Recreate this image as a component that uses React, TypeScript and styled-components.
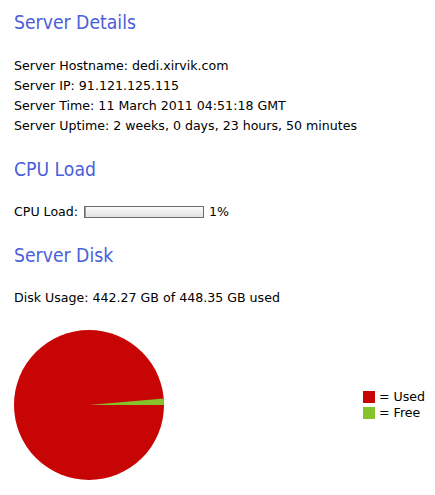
import React from "react";
import styled, { createGlobalStyle } from "styled-components";

const Global = createGlobalStyle`
  html, body { margin: 0; padding: 0; background: #ffffff; }
  body { font-family: "DejaVu Sans", Verdana, sans-serif; color: #000; }
`;

const Page = styled.div`
  padding: 11px 0 0 14px;
  width: 421px;
  box-sizing: border-box;
`;

const Heading = styled.h2<{ $gap: number }>`
  margin: 0 0 ${(p) => p.$gap}px 0;
  font-family: "DejaVu Sans Condensed", "DejaVu Sans", sans-serif;
  font-stretch: condensed;
  font-size: 19.2px;
  line-height: 24px;
  font-weight: normal;
  color: #4a60d8;
`;

const Section = styled.div<{ $gap: number }>`
  margin-bottom: ${(p) => p.$gap}px;
`;

const Line = styled.div`
  font-size: 12.6px;
  line-height: 20px;
  white-space: nowrap;
`;

const CpuRow = styled.div`
  display: flex;
  align-items: center;
  font-size: 12.6px;
  line-height: 20px;
  gap: 5px;
  white-space: nowrap;
`;

const Bar = styled.div`
  width: 120px;
  height: 12px;
  box-sizing: border-box;
  border: 1px solid #6b6b6b;
  background: linear-gradient(#fafafa, #ececec 60%, #e2e2e2);
  display: flex;
  margin-left: 1px;
`;

const Fill = styled.div`
  height: 100%;
  background: #7dc42a;
`;

const ChartRow = styled.div`
  display: flex;
  align-items: center;
`;

const PieSvg = styled.svg`
  flex: none;
  display: block;
`;

const Legend = styled.div`
  margin-left: 199px;
  display: flex;
  flex-direction: column;
  flex: none;
`;

const LegendItem = styled.div`
  display: flex;
  align-items: center;
  gap: 4px;
  font-size: 12.6px;
  line-height: 16px;
  white-space: nowrap;
`;

const Swatch = styled.span<{ $color: string }>`
  width: 12px;
  height: 12px;
  background: ${(p) => p.$color};
  display: inline-block;
  flex: none;
`;

function Pie({ used, total }: { used: number; total: number }) {
  const r = 75;
  const cx = 75;
  const cy = 75;
  const freeFrac = (total - used) / total;
  const a = freeFrac * 2 * Math.PI;
  const x = cx + r * Math.cos(a);
  const y = cy - r * Math.sin(a);
  return (
    <PieSvg width="150" height="150" viewBox="0 0 150 150">
      <circle cx={cx} cy={cy} r={r} fill="#c80505" />
      <path d={`M${cx},${cy} L${cx + r},${cy} A${r},${r} 0 0 0 ${x},${y} Z`} fill="#86c22a" />
    </PieSvg>
  );
}

export default function App() {
  return (
    <>
      <Global />
      <Page>
        <Heading $gap={21}>Server Details</Heading>
        <Section $gap={22}>
          <Line>Server Hostname: dedi.xirvik.com</Line>
          <Line>Server IP: 91.121.125.115</Line>
          <Line>Server Time: 11 March 2011 04:51:18 GMT</Line>
          <Line>Server Uptime: 2 weeks, 0 days, 23 hours, 50 minutes</Line>
        </Section>
        <Heading $gap={20}>CPU Load</Heading>
        <Section $gap={22}>
          <CpuRow>
            CPU Load:
            <Bar>
              <Fill style={{ width: "1%" }} />
            </Bar>
            1%
          </CpuRow>
        </Section>
        <Heading $gap={20}>Server Disk</Heading>
        <Section $gap={22}>
          <Line>Disk Usage: 442.27 GB of 448.35 GB used</Line>
        </Section>
        <ChartRow>
          <Pie used={442.27} total={448.35} />
          <Legend>
            <LegendItem>
              <Swatch $color="#c80505" /> = Used
            </LegendItem>
            <LegendItem>
              <Swatch $color="#86c22a" /> = Free
            </LegendItem>
          </Legend>
        </ChartRow>
      </Page>
    </>
  );
}
